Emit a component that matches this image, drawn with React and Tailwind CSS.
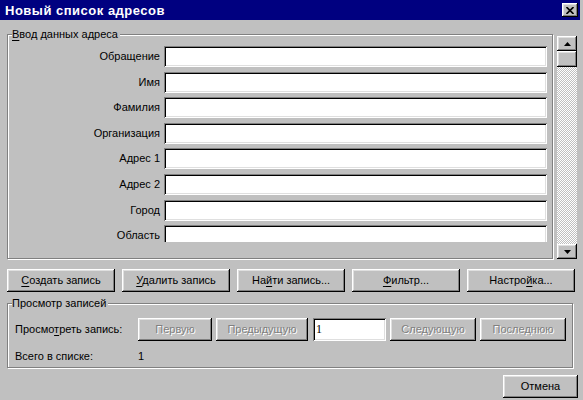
const raised =
  "bg-[#c0c0c0] shadow-[inset_-1px_-1px_#000,inset_1px_1px_#fff,inset_-2px_-2px_#808080,inset_2px_2px_#dfdfdf]";
const sunken =
  "bg-white shadow-[inset_1px_1px_#808080,inset_-1px_-1px_#fff,inset_2px_2px_#000,inset_-2px_-2px_#dfdfdf]";
const etched = "border border-[#808080] shadow-[inset_1px_1px_#fff,1px_1px_#fff]";

const fields = ["Обращение", "Имя", "Фамилия", "Организация", "Адрес 1", "Адрес 2", "Город", "Область"];

// кнопка с подчеркнутой буквой (мнемоника)
const Btn = ({ pre = "", u = "", post = "", className = "" }) => (
  <button className={`${raised} h-[23px] flex items-center justify-center ${className}`}>
    <span>
      {pre}
      {u && <span className="underline underline-offset-[2px]">{u}</span>}
      {post}
    </span>
  </button>
);

const Disabled = ({ label, className = "" }) => (
  <div className={`${raised} h-[23px] flex items-center justify-center text-[#808080] [text-shadow:1px_1px_#fff] ${className}`}>
    {label}
  </div>
);

const Arrow = ({ up }) => (
  <svg width="7" height="4" viewBox="0 0 7 4">
    <path d={up ? "M3.5 0 L7 4 L0 4 Z" : "M0 0 L7 0 L3.5 4 Z"} fill="#000" />
  </svg>
);

export default function App() {
  return (
    <div className="w-[583px] h-[400px] bg-[#c0c0c0] pr-[3px] flex flex-col overflow-hidden text-[11px] text-black font-['Liberation_Sans',Arial,sans-serif] leading-[13px]">
      {/* заголовок окна */}
      <div className="h-[20px] bg-[#000080] flex items-center justify-between pl-[5px] pr-[2px]">
        <span className="text-white font-bold text-[13px] tracking-[0.5px]">Новый список адресов</span>
        <div className={`${raised} w-[16px] h-[14px] flex items-center justify-center`}>
          <svg width="8" height="7" viewBox="0 0 8 7">
            <path d="M0.5 0 L7.5 7 M7.5 0 L0.5 7" stroke="#000" strokeWidth="1.6" />
          </svg>
        </div>
      </div>

      {/* ввод данных + полоса прокрутки */}
      <div className="flex items-start mt-[14px] pl-[7px]">
        <div className={`relative ${etched} w-[546px] h-[225px] pt-[11px]`}>
          <span className="absolute -top-[7px] left-[4px] bg-[#c0c0c0] pr-[2px]">
            <span className="underline underline-offset-[2px]">В</span>вод данных адреса
          </span>
          <div className="h-[196px] overflow-hidden flex flex-col gap-[4.6px]">
            {fields.map((f) => (
              <div key={f} className="flex items-center shrink-0">
                <span className="w-[154px] text-right pr-[2px]">{f}</span>
                <div className={`${sunken} w-[383px] h-[21px] ml-[2px]`} />
              </div>
            ))}
          </div>
        </div>
        <div className="ml-[4px] mt-[2px] w-[20px] h-[223px] flex flex-col">
          <div className={`${raised} h-[15px] flex items-center justify-center`}>
            <Arrow up />
          </div>
          <div className={`${raised} h-[16px]`} />
          <div className="flex-1 bg-[repeating-conic-gradient(#c0c0c0_0_25%,#fff_0_50%)] bg-[length:2px_2px]" />
          <div className={`${raised} h-[15px] flex items-center justify-center`}>
            <Arrow />
          </div>
        </div>
      </div>

      {/* кнопки действий */}
      <div className="flex gap-[7px] mt-[10px] pl-[7px]">
        <Btn u="С" post="оздать запись" className="w-[108px]" />
        <Btn u="У" post="далить запись" className="w-[108px]" />
        <Btn pre="На" u="й" post="ти запись..." className="w-[108px]" />
        <Btn u="Ф" post="ильтр..." className="w-[108px]" />
        <Btn pre="Настро" u="й" post="ка..." className="w-[108px]" />
      </div>

      {/* просмотр записей */}
      <div className={`relative ${etched} ml-[7px] mt-[11px] w-[566px] h-[65px] pl-[7px] pt-[14px]`}>
        <span className="absolute -top-[7px] left-[4px] bg-[#c0c0c0] pr-[2px]">Просмотр записей</span>
        <div className="flex items-center h-[23px]">
          <span className="w-[123px]">
            Просмо<span className="underline underline-offset-[2px]">т</span>реть запись:
          </span>
          <Disabled label="Первую" className="w-[74px]" />
          <Disabled label="Предыдущую" className="w-[92px] ml-[4px]" />
          <div className={`${sunken} w-[73px] h-[23px] ml-[5px] flex items-center pl-[3px] font-['Liberation_Serif',serif] text-[12px]`}>1</div>
          <Disabled label="Следующую" className="w-[86px] ml-[4px]" />
          <Disabled label="Последнюю" className="w-[86px] ml-[4px]" />
        </div>
        <div className="flex items-center mt-[9px]">
          <span className="w-[123px]">Всего в списке:</span>
          <span>1</span>
        </div>
      </div>

      <div className="flex justify-end mt-[7px] pr-[2px]">
        <Btn post="Отмена" className="w-[75px] h-[22px]" />
      </div>
    </div>
  );
}
